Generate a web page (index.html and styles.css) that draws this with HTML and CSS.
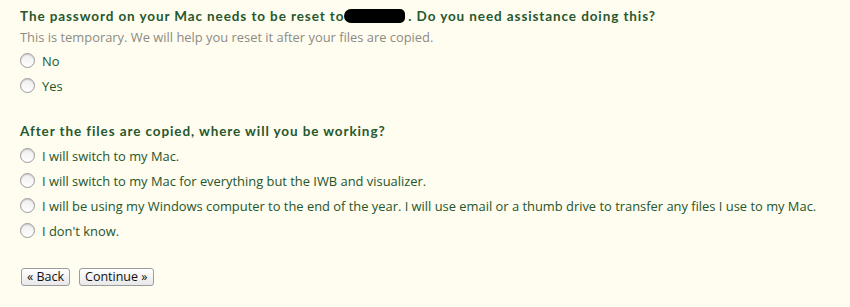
FILE: index.html
```html
<!DOCTYPE html>
<html>
<head>
<meta charset="utf-8">
<link rel="stylesheet" href="styles.css">
</head>
<body>
<form class="survey">
  <div class="question">
    <h2 class="q-title">The password on your Mac needs to be reset to<span class="redact"></span>. Do you need assistance doing this?</h2>
    <p class="q-hint">This is temporary. We will help you reset it after your files are copied.</p>
    <label class="option"><span class="radio"></span>No</label>
    <label class="option"><span class="radio"></span>Yes</label>
  </div>
  <div class="question q2">
    <h2 class="q-title">After the files are copied, where will you be working?</h2>
    <label class="option"><span class="radio"></span>I will switch to my Mac.</label>
    <label class="option"><span class="radio"></span>I will switch to my Mac for everything but the IWB and visualizer.</label>
    <label class="option"><span class="radio"></span>I will be using my Windows computer to the end of the year. I will use email or a thumb drive to transfer any files I use to my Mac.</label>
    <label class="option"><span class="radio"></span>I don't know.</label>
  </div>
  <div class="actions">
    <button type="button" class="btn">« Back</button>
    <button type="button" class="btn">Continue »</button>
  </div>
</form>
</body>
</html>
```
FILE: styles.css
```css
html, body {
  margin: 0;
  padding: 0;
  background: #fffcf0;
}
body {
  font-family: "Open Sans", "Liberation Sans", sans-serif;
  color: #24562b;
}
.survey {
  padding: 5px 20px 0 20px;
}
.q-title {
  margin: 0;
  font-family: Lato, "Open Sans", sans-serif;
  font-size: 13.5px;
  font-weight: bold;
  letter-spacing: 0.9px;
  line-height: 22px;
  color: #26582e;
}
.redact {
  display: inline-block;
  width: 61px;
  height: 14px;
  background: #000;
  border-radius: 7px 5px 5px 7px;
  vertical-align: -2px;
  margin-right: 3px;
}
.q-hint {
  margin: 1px 0 2px 0;
  font-size: 12.9px;
  line-height: 18px;
  color: #8c8c84;
}
.option {
  display: flex;
  align-items: center;
  gap: 7px;
  height: 25px;
  font-size: 12.9px;
}
.radio {
  width: 13px;
  height: 13px;
  border-radius: 50%;
  border: 1px solid #9a9a9a;
  background: linear-gradient(#eeeeee, #ffffff);
  box-shadow: inset 0 1px 1px rgba(0,0,0,0.15);
}
.q2 {
  margin-top: 22px;
}
.q2 .q-title {
  margin-bottom: 1px;
}
.actions {
  display: flex;
  gap: 9px;
  margin-top: 25px;
  padding-left: 1px;
}
.btn {
  font-family: "Open Sans", "Liberation Sans", sans-serif;
  font-size: 12.5px;
  color: #111;
  height: 18px;
  padding: 0 5px;
  border: 1px solid #9c9c9c;
  border-radius: 3px;
  background: linear-gradient(#ffffff, #e8e8e8);
  line-height: 16px;
}
```
